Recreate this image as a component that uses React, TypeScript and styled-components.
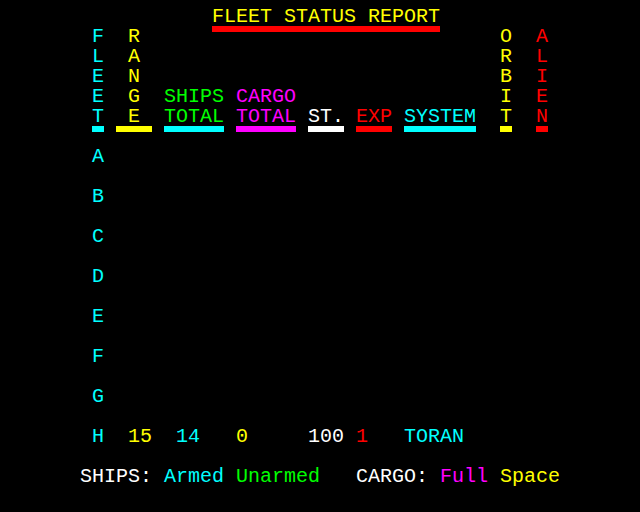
import React from "react";
import styled, { createGlobalStyle } from "styled-components";

const GlobalStyle = createGlobalStyle`
  html, body {
    margin: 0;
    padding: 0;
    background: #000;
    width: 640px;
    height: 512px;
    overflow: hidden;
  }
`;

const C = {
  red: "#ff0000",
  green: "#00ff00",
  yellow: "#ffff00",
  magenta: "#ff00ff",
  cyan: "#00ffff",
  white: "#ffffff",
};

const Screen = styled.div`
  width: 640px;
  height: 512px;
  background: #000;
  box-sizing: border-box;
  padding: 6px 80px;
`;

const Grid = styled.div`
  display: grid;
  grid-template-columns: repeat(40, 12px);
  grid-template-rows: repeat(25, 20px);
  font-family: "Liberation Mono", "DejaVu Sans Mono", monospace;
  font-size: 20px;
  line-height: 20px;
`;

/* A teletext text block: starts at a character cell, spans columns and rows */
const Text = styled.span<{ $col: number; $row: number; $span: number; $rows: number; $color: string }>`
  grid-column: ${(p) => p.$col + 1} / span ${(p) => p.$span};
  grid-row: ${(p) => p.$row + 1} / span ${(p) => p.$rows};
  color: ${(p) => p.$color};
  white-space: pre;
  padding-top: 1px;
  line-height: 20px;
`;

/* A contiguous mosaic bar occupying the top sixel row of a cell */
const Bar = styled.div<{ $col: number; $row: number; $span: number; $color: string }>`
  grid-column: ${(p) => p.$col + 1} / span ${(p) => p.$span};
  grid-row: ${(p) => p.$row + 1};
  align-self: start;
  height: 6px;
  background: ${(p) => p.$color};
`;

const T = ({ c, r, color, children }: { c: number; r: number; color: string; children: string }) => {
  const lines = children.split("\n");
  const width = Math.max(...lines.map((l) => l.length));
  return (
    <Text $col={c} $row={r} $span={width} $rows={lines.length} $color={color}>
      {children}
    </Text>
  );
};

const V = ({ c, r, color, word }: { c: number; r: number; color: string; word: string }) => (
  <T c={c} r={r} color={color}>
    {word.split("").join("\n")}
  </T>
);

const bars: [number, number, number, string][] = [
  [11, 1, 19, C.red],
  [1, 6, 1, C.cyan],
  [3, 6, 3, C.yellow],
  [7, 6, 5, C.cyan],
  [13, 6, 5, C.magenta],
  [19, 6, 3, C.white],
  [23, 6, 3, C.red],
  [27, 6, 6, C.cyan],
  [35, 6, 1, C.yellow],
  [38, 6, 1, C.red],
];

const fleets = ["A", "B", "C", "D", "E", "F", "G", "H"];

export default function App() {
  return (
    <>
      <GlobalStyle />
      <Screen>
        <Grid>
          <T c={11} r={0} color={C.yellow}>FLEET STATUS REPORT</T>
          <V c={1} r={1} color={C.cyan} word="FLEET" />
          <V c={4} r={1} color={C.yellow} word="RANGE" />
          <V c={35} r={1} color={C.yellow} word="ORBIT" />
          <V c={38} r={1} color={C.red} word="ALIEN" />
          <T c={7} r={4} color={C.green}>{"SHIPS\nTOTAL"}</T>
          <T c={13} r={4} color={C.magenta}>{"CARGO\nTOTAL"}</T>
          <T c={19} r={5} color={C.white}>ST.</T>
          <T c={23} r={5} color={C.red}>EXP</T>
          <T c={27} r={5} color={C.cyan}>SYSTEM</T>
          {bars.map(([c, r, s, col], i) => (
            <Bar key={i} $col={c} $row={r} $span={s} $color={col} />
          ))}
          {fleets.map((f, i) => (
            <T key={f} c={1} r={7 + i * 2} color={C.cyan}>{f}</T>
          ))}
          <T c={4} r={21} color={C.yellow}>15</T>
          <T c={8} r={21} color={C.cyan}>14</T>
          <T c={13} r={21} color={C.yellow}>0</T>
          <T c={19} r={21} color={C.white}>100</T>
          <T c={23} r={21} color={C.red}>1</T>
          <T c={27} r={21} color={C.cyan}>TORAN</T>
          <T c={0} r={23} color={C.white}>SHIPS:</T>
          <T c={7} r={23} color={C.cyan}>Armed</T>
          <T c={13} r={23} color={C.green}>Unarmed</T>
          <T c={23} r={23} color={C.white}>CARGO:</T>
          <T c={30} r={23} color={C.magenta}>Full</T>
          <T c={35} r={23} color={C.yellow}>Space</T>
        </Grid>
      </Screen>
    </>
  );
}
